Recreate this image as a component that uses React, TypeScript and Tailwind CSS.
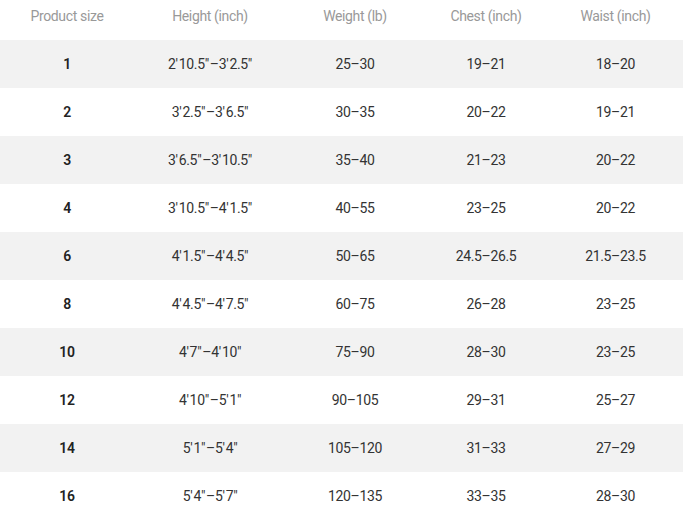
const headers = ["Product size", "Height (inch)", "Weight (lb)", "Chest (inch)", "Waist (inch)"];

// hair spaces keep the primes and dash apart like the reference
const h = (s: string) => s.replace(/'/g, "'\u200a").replace(/"/g, "\"\u200a").replace(/–/g, "–");

const rows = [
  ["1", "2'10.5\"–3'2.5\"", "25–30", "19–21", "18–20"],
  ["2", "3'2.5\"–3'6.5\"", "30–35", "20–22", "19–21"],
  ["3", "3'6.5\"–3'10.5\"", "35–40", "21–23", "20–22"],
  ["4", "3'10.5\"–4'1.5\"", "40–55", "23–25", "20–22"],
  ["6", "4'1.5\"–4'4.5\"", "50–65", "24.5–26.5", "21.5–23.5"],
  ["8", "4'4.5\"–4'7.5\"", "60–75", "26–28", "23–25"],
  ["10", "4'7\"–4'10\"", "75–90", "28–30", "23–25"],
  ["12", "4'10\"–5'1\"", "90–105", "29–31", "25–27"],
  ["14", "5'1\"–5'4\"", "105–120", "31–33", "27–29"],
  ["16", "5'4\"–5'7\"", "120–135", "33–35", "28–30"],
];

const cols = "grid grid-cols-[134px_152px_138px_124px_135px]";

export default function App() {
  return (
    <div className="w-[683px] bg-white font-['Roboto',sans-serif] text-[14px] tracking-[-0.025em]">
      <div className={`${cols} h-10 pt-[6px] text-[#999]`}>
        {headers.map((t) => (
          <div key={t} className="text-center">
            {t}
          </div>
        ))}
      </div>
      {rows.map((r, i) => (
        <div
          key={r[0]}
          className={`${cols} h-12 items-center text-[#333] ${i % 2 === 0 ? "bg-[#f2f2f2]" : "bg-white"}`}
        >
          {r.map((c, j) => (
            <div
              key={j}
              className={`text-center ${j === 0 ? "font-semibold text-[#222]" : ""} ${j === 1 ? "whitespace-nowrap" : ""}`}
            >
              {j === 1 ? h(c).trimEnd() : c}
            </div>
          ))}
        </div>
      ))}
    </div>
  );
}
